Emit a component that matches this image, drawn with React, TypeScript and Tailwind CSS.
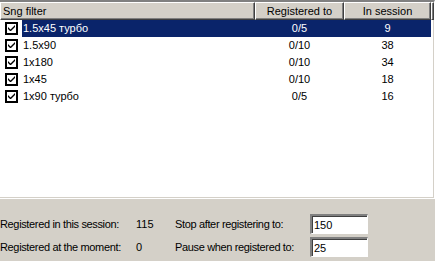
const rows = [
  { name: '1.5x45 турбо', reg: '0/5', ses: '9', selected: true },
  { name: '1.5x90', reg: '0/10', ses: '38' },
  { name: '1x180', reg: '0/10', ses: '34' },
  { name: '1x45', reg: '0/10', ses: '18' },
  { name: '1x90 турбо', reg: '0/5', ses: '16' },
];

const font = { fontFamily: '"Liberation Sans", Arial, sans-serif' };

const CheckBox = () => (
  <div className="w-[13px] h-[13px] border-2 border-black bg-white flex items-center justify-center shrink-0">
    <svg width="7" height="7" viewBox="0 0 7 7">
      <path d="M0 2 L0 4 L2 6 L3 6 L7 2 L7 0 L2.5 4.5 Z" fill="#000" />
    </svg>
  </div>
);

const HeaderCell = ({ children, className }: { children?: React.ReactNode; className: string }) => (
  <div
    className={`h-[18px] bg-[#d4d0c8] border-t border-l border-t-white border-l-white border-b border-r border-b-[#404040] border-r-[#404040] shadow-[inset_-1px_-1px_0_#808080] flex items-center ${className}`}
  >
    {children}
  </div>
);

const inputCls =
  'h-[20px] w-[58px] bg-white border-t-2 border-l-2 border-t-[#808080] border-l-[#808080] border-b border-r border-b-white border-r-white shadow-[inset_1px_1px_0_#404040] pl-[2px] text-[11px] outline-none';

const App = () => {
  return (
    <div className="w-[435px] h-[261px] bg-[#d4d0c8] text-[11px] text-black flex flex-col overflow-hidden" style={font}>
      {/* list view */}
      <div className="h-[199px] bg-white border-t-2 border-t-[#808080] border-r border-r-white border-b border-b-white shadow-[inset_0_1px_0_#404040,inset_-1px_-1px_0_#d4d0c8] flex flex-col">
        <div className="flex">
          <HeaderCell className="w-[255px] pl-[2px]">Sng filter</HeaderCell>
          <HeaderCell className="w-[89px] justify-center">Registered to</HeaderCell>
          <HeaderCell className="w-[87px] justify-center">In session</HeaderCell>
          <HeaderCell className="flex-1" />
        </div>
        <div className="flex flex-col">
          {rows.map((r) => (
            <div key={r.name} className="flex h-[17px] items-center">
              <div className="w-[22px] pl-[5px] flex items-center">
                <CheckBox />
              </div>
              <div
                className={`flex flex-1 h-full items-center mr-[3px] ${r.selected ? 'bg-[#0a246a] text-white' : ''}`}
              >
                <div className="w-[233px] pl-[1px]">{r.name}</div>
                <div className="w-[89px] text-center">{r.reg}</div>
                <div className="w-[87px] text-center">{r.ses}</div>
              </div>
            </div>
          ))}
        </div>
      </div>

      {/* bottom panel */}
      <div className="flex-1 pt-[15px] grid grid-cols-[136px_39px_135px_58px] grid-rows-[20px_20px] gap-y-[3px] items-center">
        <div className="tracking-[-0.35px]">Registered in this session:</div>
        <div>115</div>
        <div className="tracking-[-0.35px]">Stop after registering to:</div>
        <input readOnly value="150" className={inputCls} style={font} />
        <div className="tracking-[-0.35px]">Registered at the moment:</div>
        <div>0</div>
        <div className="tracking-[-0.35px]">Pause when registered to:</div>
        <input readOnly value="25" className={inputCls} style={font} />
      </div>
    </div>
  );
};

export default App;
